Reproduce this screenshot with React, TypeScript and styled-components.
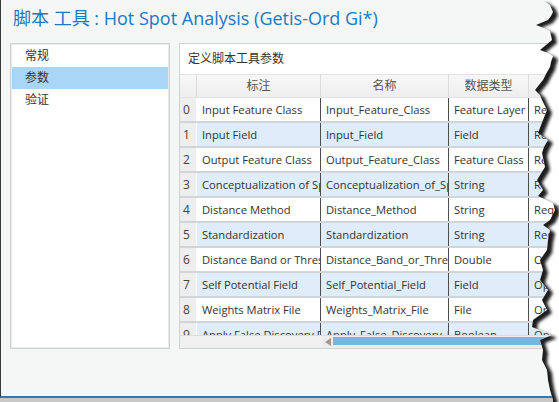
import React from "react";
import styled, { createGlobalStyle } from "styled-components";

const Global = createGlobalStyle`
  html, body { margin: 0; padding: 0; background: #ffffff; }
  body { font-family: "Open Sans", "Noto Sans CJK SC", sans-serif; }
`;

const UI = `"Open Sans", "Noto Sans CJK SC", sans-serif`;

const Frame = styled.div`
  position: relative;
  width: 559px;
  height: 402px;
  overflow: hidden;
  background: linear-gradient(#8e8e8e, #c8c8c8);
`;

const Page = styled.div`
  width: 620px;
  height: 398px;
  box-sizing: border-box;
  border-left: 1px solid #3a3a3a;
  border-bottom: 2px solid #2f79b8;
  background: #f5f7f7;
  display: flex;
  flex-direction: column;
  overflow: hidden;
`;

const Title = styled.div`
  height: 43px;
  box-sizing: border-box;
  padding: 6px 0 0 12px;
  font-family: ${UI};
  font-size: 18px;
  line-height: 24px;
  color: #1a79c3;
  white-space: nowrap;
`;

const Body = styled.div`
  display: flex;
  gap: 9px;
  padding-left: 9px;
  height: 306px;
`;

const Nav = styled.div`
  flex: 0 0 160px;
  box-sizing: border-box;
  border: 1px solid #d2d2d2;
  box-shadow: inset 0 0 0 1px #e9e9e9;
  background: #ffffff;
  padding-top: 1px;
  display: flex;
  flex-direction: column;
`;

const NavItem = styled.div<{ $active?: boolean }>`
  height: 22px;
  line-height: 22px;
  padding-left: 13px;
  margin: 0 1px;
  font-family: ${UI};
  font-size: 12px;
  color: #333333;
  background: ${(p) => (p.$active ? "#a9d5f6" : "transparent")};
`;

const Panel = styled.div`
  flex: 1;
  min-width: 0;
  box-sizing: border-box;
  border: 1px solid #d2d2d2;
  border-right: none;
  background: #ffffff;
  display: flex;
  flex-direction: column;
  overflow: hidden;
`;

const PanelTitle = styled.div`
  height: 30px;
  line-height: 30px;
  padding-left: 8px;
  border-bottom: 1px solid #e3e3e3;
  font-family: ${UI};
  font-size: 12px;
  color: #333333;
`;

const COLS = "17px 124px 128px 80px 160px";

const HeaderRow = styled.div`
  display: grid;
  grid-template-columns: ${COLS};
  height: 23px;
  background: linear-gradient(#f7f7f7, #eeeeee);
  border-bottom: 1px solid #e4e4e4;
  box-sizing: border-box;
`;

const HeadCell = styled.div`
  font-family: ${UI};
  font-size: 12px;
  line-height: 22px;
  color: #555555;
  text-align: center;
  border-right: 1px solid #dcdcdc;
  overflow: hidden;
  white-space: nowrap;
`;

const Rows = styled.div`
  height: 237px;
  overflow: hidden;
`;

const Row = styled.div<{ $alt: boolean }>`
  display: grid;
  grid-template-columns: ${COLS};
  height: 25px;
  box-sizing: border-box;
  border-bottom: 2px solid #d2d5d8;
  background: ${(p) => (p.$alt ? "#deedf9" : "#ffffff")};
`;

const NumCell = styled.div`
  background: #eeeeee;
  border-right: 1px solid #ffffff;
  font-family: ${UI};
  font-size: 12px;
  line-height: 23px;
  color: #444444;
  padding-left: 3px;
`;

const Cell = styled.div`
  font-family: ${UI};
  font-size: 11.2px;
  line-height: 23px;
  color: #333333;
  padding-left: 5px;
  border-right: 1px solid #4d4d4d;
  overflow: hidden;
  white-space: nowrap;
`;

const Scroll = styled.div`
  height: 13px;
  display: flex;
  background: #ececec;
  border-top: 1px solid #dcdcdc;
  box-sizing: border-box;
`;

const ScrollFrozen = styled.div`
  width: 142px;
  background: #f0f0f0;
`;

const ScrollArrow = styled.div`
  width: 11px;
  display: flex;
  align-items: center;
  justify-content: center;
  &::before {
    content: "";
    border-style: solid;
    border-width: 4px 6px 4px 0;
    border-color: transparent #9a9a9a transparent transparent;
  }
`;

const ScrollThumb = styled.div`
  flex: 1;
  margin: 1px 0 3px 0;
  background: #79b6df;
`;

const Tear = styled.svg`
  position: absolute;
  top: 0;
  left: 519px;
  width: 40px;
  height: 402px;
`;

const rows: [string, string, string, string][] = [
  ["Input Feature Class", "Input_Feature_Class", "Feature Layer", "Required"],
  ["Input Field", "Input_Field", "Field", "Required"],
  ["Output Feature Class", "Output_Feature_Class", "Feature Class", "Required"],
  ["Conceptualization of Spatial Relationships", "Conceptualization_of_Spatial_Relationships", "String", "Required"],
  ["Distance Method", "Distance_Method", "String", "Required"],
  ["Standardization", "Standardization", "String", "Required"],
  ["Distance Band or Threshold Distance", "Distance_Band_or_Threshold_Distance", "Double", "Optional"],
  ["Self Potential Field", "Self_Potential_Field", "Field", "Optional"],
  ["Weights Matrix File", "Weights_Matrix_File", "File", "Optional"],
  ["Apply False Discovery Rate (FDR) Correction", "Apply_False_Discovery_Rate__FDR__Correction", "Boolean", "Optional"],
];

const edge: [number, number][] = [
  [543, 0], [550, 5], [553, 12], [551, 16], [548, 20], [536, 25], [544, 28], [550, 31], [552, 40],
  [546, 45], [540, 50], [548, 53], [553, 56], [551, 62], [550, 67], [546, 74], [543, 80],
  [535, 90], [540, 95], [542, 100], [547, 110], [543, 120], [538, 133], [548, 140],
  [544, 147], [542, 153], [545, 167], [537, 180], [543, 190], [538, 196], [553, 203],
  [555, 210], [550, 220], [543, 225], [550, 230], [548, 240], [547, 250], [540, 260],
  [543, 270], [540, 280], [548, 290], [542, 300], [547, 310], [533, 320], [532, 327],
  [552, 335], [540, 340], [543, 350], [542, 360], [547, 370], [548, 380], [550, 390],
  [553, 400], [553, 402],
];

const pts = (arr: [number, number][]) => arr.map(([x, y]) => `${x - 519},${y}`).join(" ");
const rightPoly = pts([...edge, [600, 402], [600, 0]]);
const leftPoly = pts([...edge, [480, 402], [480, 0]]);

export default function App() {
  return (
    <>
      <Global />
      <Frame>
        <Page>
          <Title>脚本 工具 : Hot Spot Analysis (Getis-Ord Gi*)</Title>
          <Body>
            <Nav>
              <NavItem>常规</NavItem>
              <NavItem $active>参数</NavItem>
              <NavItem>验证</NavItem>
            </Nav>
            <Panel>
              <PanelTitle>定义脚本工具参数</PanelTitle>
              <HeaderRow>
                <HeadCell />
                <HeadCell>标注</HeadCell>
                <HeadCell>名称</HeadCell>
                <HeadCell>数据类型</HeadCell>
                <HeadCell>类型</HeadCell>
              </HeaderRow>
              <Rows>
                {rows.map((r, i) => (
                  <Row key={i} $alt={i % 2 === 1}>
                    <NumCell>{i}</NumCell>
                    <Cell>{r[0]}</Cell>
                    <Cell>{r[1]}</Cell>
                    <Cell>{r[2]}</Cell>
                    <Cell>{r[3]}</Cell>
                  </Row>
                ))}
              </Rows>
              <Scroll>
                <ScrollFrozen />
                <ScrollArrow />
                <ScrollThumb />
              </Scroll>
            </Panel>
          </Body>
        </Page>
        <Tear viewBox="0 0 40 402" preserveAspectRatio="none">
          <defs>
            <clipPath id="rightSide">
              <polygon points={rightPoly} />
            </clipPath>
            <filter id="blur" x="-50%" y="-10%" width="200%" height="120%">
              <feGaussianBlur stdDeviation="1.4" />
            </filter>
          </defs>
          <g clipPath="url(#rightSide)">
            <rect x="0" y="0" width="40" height="402" fill="#ffffff" />
            <polygon points={leftPoly} fill="#1c1c1c" transform="translate(5,3)" filter="url(#blur)" />
          </g>
        </Tear>
      </Frame>
    </>
  );
}
